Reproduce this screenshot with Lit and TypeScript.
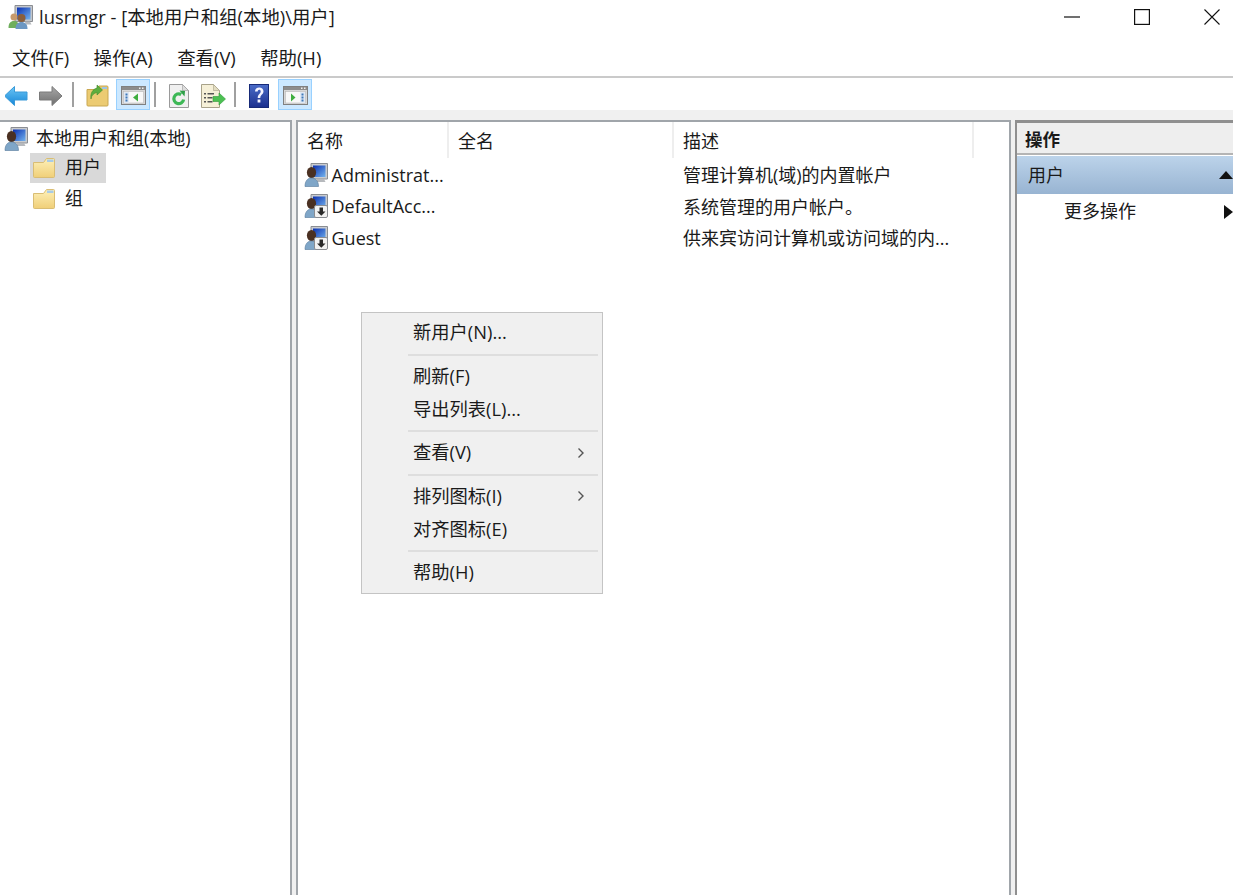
import { LitElement, html, css, svg } from "lit";
import { customElement } from "lit/decorators.js";

const defs = html`<svg class="defs" width="0" height="0" aria-hidden="true"><defs>
  <linearGradient id="gFold" x1="0" y1="0" x2="0" y2="1"><stop offset="0" stop-color="#fdf0b8"/><stop offset="1" stop-color="#f0cf78"/></linearGradient>
  <linearGradient id="gBlue" x1="0" y1="0" x2="0" y2="1"><stop offset="0" stop-color="#6cc6f5"/><stop offset="1" stop-color="#1686d8"/></linearGradient>
  <linearGradient id="gGray" x1="0" y1="0" x2="0" y2="1"><stop offset="0" stop-color="#a8a8a8"/><stop offset="1" stop-color="#6e6e6e"/></linearGradient>
  <linearGradient id="gScreen" x1="0" y1="0" x2="1" y2="1"><stop offset="0" stop-color="#0a2fb0"/><stop offset="1" stop-color="#74b4ee"/></linearGradient>
  <linearGradient id="gHelp" x1="0" y1="0" x2="0" y2="1"><stop offset="0" stop-color="#4a6cc8"/><stop offset="1" stop-color="#1b2f8e"/></linearGradient>
</defs></svg>`;

const folder = html`<svg width="22" height="20" viewBox="0 0 22 20">
  <path d="M.5 4.500V18.500a1 1 0 0 0 1 1h19a1 1 0 0 0 1-1V1.500a1 1 0 0 0-1-1h-7L10.500 4.500Z" fill="url(#gFold)" stroke="#d9bd74"/>
  <path d="M14 1.500h6.500v2.500H14z" fill="#a8cbe6"/>
</svg>`;

const userPc = html`<svg width="24" height="24" viewBox="0 0 24 24">
  <path d="M7 .5h16.500v15.500H7z" fill="#c9ccd0" stroke="#8a8d92"/>
  <path d="M9 2.500h12.500v11.500H9z" fill="url(#gScreen)"/>
  <path d="M13 16h7l1.500 3h-9z" fill="#b6b9bd"/>
  <ellipse cx="7.500" cy="9.500" rx="4.600" ry="5.500" fill="#4a3022"/>
  <path d="M1 23.500c0-5.500 2.500-8.500 6.500-8.500s7 3 7 8.500z" fill="#7fa6c8" stroke="#55789a" stroke-width=".6"/>
</svg>`;

const userDown = html`<svg width="24" height="24" viewBox="0 0 24 24">
  <path d="M7 .5h16.500v15.500H7z" fill="#c9ccd0" stroke="#8a8d92"/>
  <path d="M9 2.500h12.500v11.500H9z" fill="url(#gScreen)"/>
  <ellipse cx="7.500" cy="9.500" rx="4.600" ry="5.500" fill="#4a3022"/>
  <path d="M1 23.500c0-5.500 2.500-8.500 6.500-8.500s6 3 6 8.500z" fill="#7fa6c8" stroke="#55789a" stroke-width=".6"/>
  <rect x="10.500" y="11.500" width="13" height="12" rx="1.500" fill="#f2f2f2" stroke="#8a8d92"/>
  <path d="M15.500 13.500h3.500v4h2.500l-4.200 4.200-4.300-4.200h2.500z" fill="#2a2a2a"/>
</svg>`;

const appIcon = html`<svg width="25" height="24" viewBox="0 0 25 24">
  <path d="M7 .5h17.500v16H7z" fill="#c4c7cb" stroke="#8a8d92"/>
  <path d="M9 2.500h13.500v12H9z" fill="url(#gScreen)"/>
  <path d="M17 16.500h5l1.500 3h-6z" fill="#b6b9bd"/>
  <circle cx="6" cy="12" r="3.500" fill="#c79a6c"/>
  <path d="M.5 23c0-5 2-7 5.500-7s5 2 5 7z" fill="#6fae5c"/>
  <circle cx="13.500" cy="13" r="4" fill="#8a5f3c"/>
  <path d="M7.500 24c0-5 2.500-7 6-7s6 2 6 7z" fill="#6c97c2"/>
</svg>`;

const back = html`<svg width="25" height="22" viewBox="1.500 0 25 22">
  <path d="M1 11 11 1.500V7h12.500v8H11v5.500Z" fill="url(#gBlue)" stroke="#3a9ad8"/>
</svg>`;
const forward = html`<svg width="25" height="22" viewBox="1 0 25 22">
  <path d="M24 11 14 1.500V7H1.500v8H14v5.500Z" fill="url(#gGray)" stroke="#7a7a7a"/>
</svg>`;
const up = html`<svg width="23" height="23" viewBox="0 0 23 23">
  <path d="M1 5.500V21a1 1 0 0 0 1 1h19a1 1 0 0 0 1-1V3a1 1 0 0 0-1-1h-8l-3 3.500Z" fill="#eccb72" stroke="#c9a750"/>
  <path d="M16 3h5v2h-5z" fill="#9cc4e4"/>
  <path d="M5 15c.5-4 3-6 6-6.500V11l5.500-5L11 1v3C7 5 4 9 5 15Z" fill="#5cae3e" stroke="#3f8a2a" stroke-width=".6"/>
</svg>`;
const pane = (right: boolean) => html`<svg width="25" height="19" viewBox="0 0 25 19">
  <rect x=".5" y=".5" width="24" height="18" fill="#d8d8d8" stroke="#808080"/>
  <rect x="1" y="1" width="23" height="3" fill="#8c8c8c"/>
  <rect x="18" y="1.500" width="1.500" height="1.500" fill="#eee"/><rect x="21" y="1.500" width="1.500" height="1.500" fill="#eee"/>
  <rect x="2.500" y="5.500" width="20" height="11.500" fill="#f8f8f8" stroke="#b8b8b8" stroke-width=".6"/>
  ${right
    ? svg`<path d="M17 6h5v11h-5z" fill="#dfe8f4"/><path d="M18.500 7.500h2v2h-2zM18.500 10.500h2v2h-2zM18.500 13.500h2v2h-2z" fill="#3f78b8"/><path d="M8 7.500v8l4.500-4z" fill="#3fae3f"/>`
    : svg`<path d="M3 6h5v11H3z" fill="#dfe8f4"/><path d="M4.500 7.500h2v2h-2zM4.500 10.500h2v2h-2zM4.500 13.500h2v2h-2z" fill="#3f78b8"/><path d="M17 7.500v8l-5-4z" fill="#3fae3f"/>`}
</svg>`;
const refresh = html`<svg width="20" height="24" viewBox="0 0 20 24">
  <path d="M.5.500h13l6 6v17H.5z" fill="#f0f0f0" stroke="#9a9a9a"/>
  <path d="M13.500.500v6h6z" fill="#ddd" stroke="#9a9a9a" stroke-width=".6"/>
  <path d="M14.600 15.500a4.900 4.900 0 1 1-2.400-5" fill="none" stroke="#3db856" stroke-width="3.200"/>
  <path d="M10.500 6.500l5.500.5-.5 5.500z" fill="#2f9f48"/>
</svg>`;
const exportIcon = html`<svg width="25" height="24" viewBox="0 0 25 24">
  <path d="M.5.500h12l6 6v17H.5z" fill="#f6f0d8" stroke="#a8a28a"/>
  <path d="M12.500.500v6h6z" fill="#e2dcc0" stroke="#a8a28a" stroke-width=".6"/>
  <path d="M3 9h2v1.500H3zM6.500 9H13v1.500H6.500zM3 13h2v1.500H3zM6.500 13h5v1.500h-5zM3 17h2v1.500H3zM6.500 17h5v1.500h-5z" fill="#555"/>
  <path d="M12 12.500h6V9l6.500 6-6.500 6v-3.500h-6z" fill="#4cc052" stroke="#2f9a3a" stroke-width=".6"/>
</svg>`;
const help = html`<svg width="20" height="24" viewBox="0 0 20 24">
  <rect x=".5" y=".5" width="19" height="23" fill="url(#gHelp)" stroke="#172a78"/>
  <path d="M6 7.500C6 4.800 7.800 3.500 10.200 3.500s4.300 1.400 4.300 3.800c0 3.300-3.200 3.400-3.200 6.700H8.700c0-4 3-4.300 3-6.600 0-1-.6-1.600-1.500-1.600-1 0-1.500.7-1.500 1.700zM8.600 15.500h2.800v3H8.600z" fill="#f4f4ff"/>
</svg>`;

@customElement("app-root")
export class AppRoot extends LitElement {
  static styles = css`
    :host {
      display: block;
      width: 1233px;
      height: 895px;
      overflow: hidden;
      background: #fff;
      color: #1a1a1a;
      font-family: "Open Sans", "Noto Sans CJK SC", sans-serif;
      font-size: 18px;
    }
    .defs { position: absolute; }
    .app { position: relative; display: flex; flex-direction: column; height: 895px; }
    svg { display: block; flex: none; }

    .title { height: 38px; box-sizing: border-box; flex: none; display: flex; align-items: center; padding: 0 0 5px 8px; gap: 28px; }
    .title .name { margin: 0 -22px 0 -22px; font-size: 18.400px; flex: 1; padding-bottom: 1px; }
    .ctl { width: 42px; height: 30px; display: flex; align-items: center; justify-content: center; }

    .menubar { height: 38px; flex: none; display: flex; align-items: center; padding-left: 12px; gap: 24.400px; border-bottom: 2px solid #cacaca; font-size: 18.400px; }
    .toolbar { height: 32px; flex: none; display: flex; align-items: center; background: #fff; }
    .slot { width: 34px; height: 31px; box-sizing: border-box; display: flex; align-items: center; justify-content: center; border: 1px solid transparent; padding-top: 3px; }
    .slot.on { background: #cce8ff; border-color: #99d1ff; margin-left: 2px; }
    .sep { width: 2px; height: 25px; background: #a0a0a0; margin: 0 6px 0 4px; }

    .panes { flex: 1; min-height: 0; display: flex; gap: 4px; background: #f0f0f0; padding-top: 10px; }
    .tree { width: 292px; box-sizing: border-box; background: #fff; border: solid #a0a5aa; border-width: 2px 2px 0 0; padding: 3px 0 0 4px; }
    .tree-row { display: flex; align-items: center; height: 31px; }
    .tree-row span { padding-bottom: 4px; }
    .tree-root { gap: 8px; height: 28px; }
    .tree-item { margin-left: 26px; width: 76px; padding-left: 3px; gap: 10px; box-sizing: border-box; height: 30px; }
    .tree-item.sel { background: #d9d9d9; }
    .tree-item + .tree-item { margin-top: 1px; }

    .list { width: 715px; box-sizing: border-box; background: #fff; border: solid #a0a5aa; border-width: 2px 2px 0 2px; }
    .head, .row { display: grid; grid-template-columns: 151px 225px 300px; }
    .head { height: 37px; align-items: start; }
    .head > div { height: 36px; display: flex; align-items: center; padding-left: 9px; box-sizing: border-box; border-right: 2px solid #eeeeee; }
    .row { height: 31.500px; align-items: center; }
    .row .nm { display: flex; align-items: center; gap: 4px; padding-left: 5.500px; }
    .row .desc { grid-column: 3; padding: 0 0 1px 9px; white-space: nowrap; }

    .actions { flex: 1; background: #fff; border: solid #8f8f8f; border-width: 3px 0 0 2px; display: flex; flex-direction: column; }
    .act-head { height: 30px; flex: none; background: #eeeeee; border-bottom: 2px solid #b4b4b4; display: flex; align-items: center; padding-left: 8px; font-weight: 700; font-size: 17.500px; }
    .act-sec { height: 38px; flex: none; background: linear-gradient(#bcd3ea, #98b4d2); display: flex; align-items: center; justify-content: space-between; padding-left: 11px; margin-top: 1px; }
    .act-sec span { padding-bottom: 2px; }
    .act-more span { padding-bottom: 4px; }
    .act-more { height: 36px; flex: none; display: flex; align-items: center; justify-content: space-between; padding-left: 47px; }

    .ctx { position: absolute; left: 361px; top: 312px; width: 242px; box-sizing: border-box; background: #f0f0f0; border: 1px solid #c4c4c4; padding: 3.500px 4px 3.500px 46px; font-size: 18.300px; }
    .ctx-item { height: 33px; box-sizing: border-box; display: flex; align-items: center; justify-content: space-between; padding: 0 13px 4px 5px; }
    .ctx-sep { height: 2px; background: #dedede; margin: 4.250px 0; }
    .chev { margin-top: 3px; }
  `;

  render() {
    const chev = html`<svg class="chev" width="8" height="12" viewBox="0 0 8 12"><path d="M1.500 1.500 6 6l-4.500 4.500" fill="none" stroke="#555" stroke-width="1.400"/></svg>`;
    return html`${defs}
    <div class="app">
      <div class="title">
        ${appIcon}
        <div class="name">lusrmgr - [本地用户和组(本地)\\用户]</div>
        <div class="ctl"><svg width="16" height="2" viewBox="0 0 16 2"><path d="M0 1h16" stroke="#111" stroke-width="1.200"/></svg></div>
        <div class="ctl"><svg width="16" height="16" viewBox="0 0 16 16"><rect x=".6" y=".6" width="14.800" height="14.800" fill="none" stroke="#111" stroke-width="1.200"/></svg></div>
        <div class="ctl"><svg width="16" height="16" viewBox="0 0 16 16"><path d="M.5.500l15 15M15.500.500l-15 15" fill="none" stroke="#111" stroke-width="1.100"/></svg></div>
      </div>
      <div class="menubar"><span>文件(F)</span><span>操作(A)</span><span>查看(V)</span><span>帮助(H)</span></div>
      <div class="toolbar">
        <div class="slot">${back}</div><div class="slot">${forward}</div>
        <div class="sep"></div>
        <div class="slot">${up}</div><div class="slot on">${pane(false)}</div>
        <div class="sep"></div>
        <div class="slot">${refresh}</div><div class="slot">${exportIcon}</div>
        <div class="sep"></div>
        <div class="slot">${help}</div><div class="slot on">${pane(true)}</div>
      </div>
      <div class="panes">
        <div class="tree">
          <div class="tree-row tree-root">${userPc}<span>本地用户和组(本地)</span></div>
          <div class="tree-row tree-item sel">${folder}<span>用户</span></div>
          <div class="tree-row tree-item">${folder}<span>组</span></div>
        </div>
        <div class="list">
          <div class="head"><div>名称</div><div>全名</div><div>描述</div></div>
          <div class="row"><div class="nm">${userPc}<span>Administrat...</span></div><div class="desc">管理计算机(域)的内置帐户</div></div>
          <div class="row"><div class="nm">${userDown}<span>DefaultAcc...</span></div><div class="desc">系统管理的用户帐户。</div></div>
          <div class="row"><div class="nm">${userDown}<span>Guest</span></div><div class="desc">供来宾访问计算机或访问域的内...</div></div>
        </div>
        <div class="actions">
          <div class="act-head">操作</div>
          <div class="act-sec"><span>用户</span><svg width="14" height="8" viewBox="0 0 14 8"><path d="M7 0l7 8H0z" fill="#111"/></svg></div>
          <div class="act-more"><span>更多操作</span><svg width="9" height="14" viewBox="0 0 9 14"><path d="M0 0l9 7-9 7z" fill="#111"/></svg></div>
        </div>
      </div>
      <div class="ctx">
        <div class="ctx-item">新用户(N)...</div>
        <div class="ctx-sep"></div>
        <div class="ctx-item">刷新(F)</div>
        <div class="ctx-item">导出列表(L)...</div>
        <div class="ctx-sep"></div>
        <div class="ctx-item"><span>查看(V)</span>${chev}</div>
        <div class="ctx-sep"></div>
        <div class="ctx-item"><span>排列图标(I)</span>${chev}</div>
        <div class="ctx-item">对齐图标(E)</div>
        <div class="ctx-sep"></div>
        <div class="ctx-item">帮助(H)</div>
      </div>
    </div>`;
  }
}
